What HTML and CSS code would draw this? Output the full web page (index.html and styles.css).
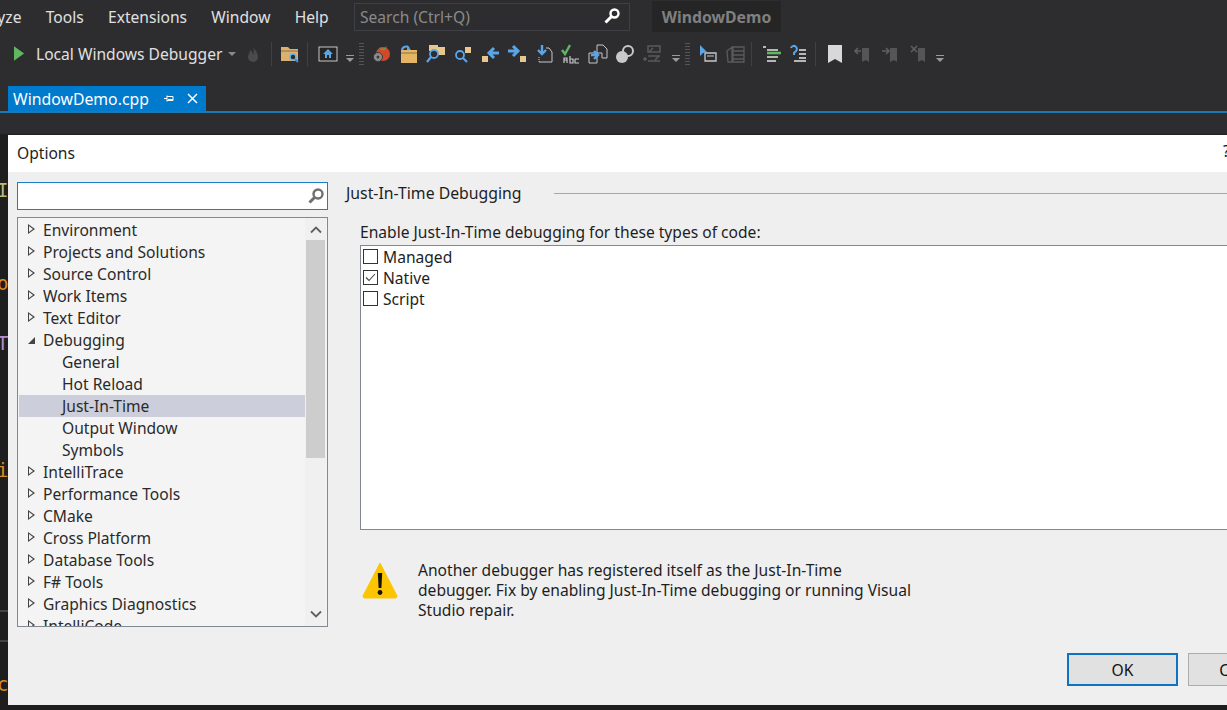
FILE: index.html
```html
<!DOCTYPE html>
<html lang="en">
<head>
<meta charset="utf-8">
<title>Options</title>
<link rel="stylesheet" href="styles.css">
</head>
<body>
<div class="ide">
  <div class="menubar">
    <span class="menu-item first">Analyze</span>
    <span class="menu-item">Tools</span>
    <span class="menu-item">Extensions</span>
    <span class="menu-item">Window</span>
    <span class="menu-item">Help</span>
    <div class="quick-search">
      <span>Search (Ctrl+Q)</span>
      <svg class="key" viewBox="0 0 18 18"><circle cx="11.5" cy="6.5" r="4" fill="none" stroke="#fff" stroke-width="2.4"/><path d="M8.5 9.5 2.5 15.5" stroke="#fff" stroke-width="3"/></svg>
    </div>
    <div class="solution-name">WindowDemo</div>
  </div>

  <div class="toolbar">
    <svg class="play" viewBox="0 0 12 16"><path d="M0 0 11 8 0 16z" fill="#5fb760"/></svg>
    <span class="debugger">Local Windows Debugger</span>
    <svg class="drop" viewBox="0 0 8 4"><path d="M0 0h8L4 4z" fill="#8a8a8a"/></svg>
    <svg class="ico flame" viewBox="0 0 20 20"><path d="M10 2c1 4 5 6 5 11a5 5 0 0 1-10 0c0-3 2-4 2-7 2 1 3 3 3 5 1-2 1-6 0-9z" fill="#4a4a4c"/></svg>
    <i class="sep sep-a"></i>
    <svg class="ico" viewBox="0 0 20 20"><path d="M1 3h7l2 2h8v12H1z" fill="#d9b26f"/><path d="M1 7h17" stroke="#8e7342"/><circle cx="13" cy="13" r="3" fill="#2d2d30" stroke="#6db0e8" stroke-width="1.6"/><path d="m15 15 3 3" stroke="#3b8fd6" stroke-width="2"/></svg>
    <i class="sep sep-b"></i>
    <svg class="ico" viewBox="0 0 20 20"><rect x="1" y="3" width="18" height="14" fill="#252526" stroke="#c8c8c8"/><path d="m10 5-5 5h2v4h6v-4h2z" fill="#5aa5e6"/><rect x="9" y="11" width="2" height="3" fill="#252526"/></svg>
    <svg class="more more-a" viewBox="0 0 8 8"><path d="M0 0h8v1H0z" fill="#9a9a9a"/><path d="M0 3h8L4 7z" fill="#9a9a9a"/></svg>
    <i class="grip"></i>
    <svg class="ico tight" viewBox="0 0 20 20"><circle cx="12" cy="10" r="7" fill="#d2492a"/><path d="m9 3 3 2 4-3-2 4h-4z" fill="#5aa050"/><circle cx="7" cy="13" r="4.5" fill="#8d8d8d" stroke="#3a3a3a"/><circle cx="7" cy="13" r="1.5" fill="#3a3a3a"/></svg>
    <svg class="ico" viewBox="0 0 20 20"><path d="M2 6h16v13H2z" fill="#e3b565"/><path d="M2 9h16" stroke="#8e7342"/><path d="M11 2h7v4h-7z" fill="#2d2d30"/><path d="M3 6a4 4 0 0 1 7-2" fill="none" stroke="#5aa5e6" stroke-width="2"/><path d="M8 1v5h4z" fill="#5aa5e6"/></svg>
    <svg class="ico" viewBox="0 0 20 20"><rect x="3" y="1" width="9" height="6" fill="#e8c78e"/><rect x="11" y="3" width="8" height="8" fill="#e8c78e"/><circle cx="8" cy="10" r="4" fill="#2d2d30" stroke="#5aa5e6" stroke-width="1.8"/><path d="m5 13-4 5" stroke="#5aa5e6" stroke-width="2.2"/></svg>
    <svg class="ico" viewBox="0 0 20 20"><rect x="12" y="3" width="6" height="6" fill="#e8c78e"/><circle cx="7" cy="11" r="4" fill="none" stroke="#5aa5e6" stroke-width="1.8"/><path d="m10 14 4 4" stroke="#5aa5e6" stroke-width="2.2"/></svg>
    <svg class="ico" viewBox="0 0 20 20"><rect x="2" y="12" width="6" height="6" fill="#e8c78e"/><path d="M19 9h-8m3-5-5 5 5 5" fill="none" stroke="#5aa5e6" stroke-width="3"/></svg>
    <svg class="ico" viewBox="0 0 20 20"><rect x="13" y="12" width="6" height="6" fill="#e8c78e"/><path d="M1 7h8M6 2l5 5-5 5" fill="none" stroke="#5aa5e6" stroke-width="3"/></svg>
    <svg class="ico" viewBox="0 0 20 20"><path d="M12 4h3l3 4v10H5" fill="none" stroke="#c8c8c8"/><path d="M5 18v-6" stroke="#c8c8c8" stroke-dasharray="1 1"/><path d="M8 1v9M4 6l4 4 4-4" fill="none" stroke="#5aa5e6" stroke-width="2.4"/></svg>
    <svg class="ico" viewBox="0 0 20 20"><path d="m1 6 3 4 5-9" fill="none" stroke="#5fb760" stroke-width="2.4"/><path d="M3 19v-5h3v5M3 16h3M9 12v7h3v-4H9M14 15h4M14 15v4h4" fill="none" stroke="#c8c8c8" stroke-width="1.2"/></svg>
    <svg class="ico" viewBox="0 0 20 20"><path d="M9 1h6l4 4v9h-5V9H9z" fill="#2d2d30" stroke="#c8c8c8"/><path d="M1 9h8v10H1z" fill="#2d2d30" stroke="#c8c8c8"/><path d="M3 11h6m-3-4 4 4-4 4" fill="none" stroke="#5aa5e6" stroke-width="2.4"/></svg>
    <svg class="ico" viewBox="0 0 20 20"><circle cx="13" cy="7" r="5" fill="none" stroke="#c8c8c8" stroke-width="2"/><circle cx="7" cy="13" r="6" fill="#c8c8c8"/></svg>
    <svg class="ico dim" viewBox="0 0 20 20"><rect x="6" y="2" width="12" height="6" fill="none" stroke="#5a5a5c" stroke-width="1.5"/><path d="M6 12h12M6 17h12M1 15h4M3 13v4M7 8l4-4m2 12 4-4" stroke="#5a5a5c" stroke-width="1.5"/></svg>
    <svg class="more more-b" viewBox="0 0 8 8"><path d="M0 0h8v1H0z" fill="#9a9a9a"/><path d="M0 3h8L4 7z" fill="#9a9a9a"/></svg>
    <i class="grip"></i>
    <svg class="ico tight-b" viewBox="0 0 20 20"><path d="M7 9h11v8H7z" fill="none" stroke="#c8c8c8" stroke-width="1.3"/><path d="M9 12h7" stroke="#c8c8c8"/><path d="M2 1v11l3-3 4-1z" fill="#5aa5e6"/></svg>
    <svg class="ico dim" viewBox="0 0 20 20"><path d="M8 3h11v15H8zM8 7h11M8 11h11M8 15h11M2 7l5-4v15H3z" fill="none" stroke="#5a5a5c" stroke-width="1.3"/></svg>
    <i class="sep sep-c"></i>
    <svg class="ico" viewBox="0 0 20 20"><path d="M2 3h3M6 6h11M6 13h11M6 17h9" stroke="#e4e4e4" stroke-width="1.4"/><path d="M6 9h14" stroke="#5fb760" stroke-width="2.6"/></svg>
    <svg class="ico" viewBox="0 0 20 20"><path d="M3 4a3 3 0 1 1 5 3L6 9v2" fill="none" stroke="#5aa5e6" stroke-width="2"/><path d="M11 6h7M11 10h7M11 14h7M6 17h12" stroke="#e4e4e4" stroke-width="1.4"/></svg>
    <i class="sep sep-d"></i>
    <svg class="ico wide" viewBox="0 0 20 20"><path d="M3 1h14v18l-7-4-7 4z" fill="#d8d8d8"/></svg>
    <svg class="ico wide" viewBox="0 0 20 20"><path d="M9 4h7v14l-3-2-4 2z" fill="#555557"/><path d="M8 7H2m3-3L2 7l3 3" fill="none" stroke="#5f5f61" stroke-width="1.6"/></svg>
    <svg class="ico wide" viewBox="0 0 20 20"><path d="M9 4h7v14l-3-2-4 2z" fill="#555557"/><path d="M1 7h6M5 4l3 3-3 3" fill="none" stroke="#5f5f61" stroke-width="1.6"/></svg>
    <svg class="ico" viewBox="0 0 20 20"><path d="M9 4h7v14l-3-2-4 2z" fill="#555557"/><path d="m2 2 6 6m0-6L2 8" stroke="#5f5f61" stroke-width="1.6"/></svg>
    <svg class="more more-c" viewBox="0 0 8 8"><path d="M0 0h8v1H0z" fill="#9a9a9a"/><path d="M0 3h8L4 7z" fill="#9a9a9a"/></svg>
  </div>

  <div class="tabstrip">
    <div class="tab">
      <span>WindowDemo.cpp</span>
      <svg class="pin" viewBox="0 0 11 11"><path d="M1 5.500h3M4 2.500v6M4 3.500h6v4H4M5 6.500h5" fill="none" stroke="#fff"/></svg>
      <svg class="tab-x" viewBox="0 0 11 11"><path d="m1 1 9 9m0-9-9 9" stroke="#fff" stroke-width="1.500"/></svg>
    </div>
  </div>

  <div class="editor">
    <div class="code-line c-a">I</div>
    <div class="code-line c-b">o</div>
    <div class="code-line c-c">T</div>
    <div class="code-line c-d">i</div>
    <i class="rule rule-a"></i>
    <i class="rule rule-b"></i>
    <div class="code-line c-e">c</div>
  </div>
</div>

<section class="dialog">
  <header class="dialog-title">
    <span>Options</span>
    <span class="help">?</span>
  </header>
  <div class="dialog-body">
    <div class="nav">
      <div class="nav-search">
        <svg viewBox="0 0 18 18"><circle cx="11" cy="7" r="4.500" fill="none" stroke="#707070" stroke-width="2.400"/><path d="M7.500 10.500 2.500 15.500" stroke="#707070" stroke-width="3"/></svg>
      </div>
      <div class="tree">
        <div class="tree-rows">
          <div class="row closed">Environment</div>
          <div class="row closed">Projects and Solutions</div>
          <div class="row closed">Source Control</div>
          <div class="row closed">Work Items</div>
          <div class="row closed">Text Editor</div>
          <div class="row open">Debugging</div>
          <div class="row child">General</div>
          <div class="row child">Hot Reload</div>
          <div class="row child selected">Just-In-Time</div>
          <div class="row child">Output Window</div>
          <div class="row child">Symbols</div>
          <div class="row closed">IntelliTrace</div>
          <div class="row closed">Performance Tools</div>
          <div class="row closed">CMake</div>
          <div class="row closed">Cross Platform</div>
          <div class="row closed">Database Tools</div>
          <div class="row closed">F# Tools</div>
          <div class="row closed">Graphics Diagnostics</div>
          <div class="row closed">IntelliCode</div>
        </div>
        <div class="scrollbar">
          <svg class="arrow" viewBox="0 0 12 8"><path d="m1 6.500 5-5 5 5" fill="none" stroke="#606060" stroke-width="1.800"/></svg>
          <div class="thumb"></div>
          <svg class="arrow" viewBox="0 0 12 8"><path d="m1 1.500 5 5 5-5" fill="none" stroke="#606060" stroke-width="1.800"/></svg>
        </div>
      </div>
    </div>
    <div class="page">
      <div class="page-heading">
        <span>Just-In-Time Debugging</span>
        <i></i>
      </div>
      <div class="page-inner">
        <div class="field-label">Enable Just-In-Time debugging for these types of code:</div>
        <div class="checklist">
          <div class="check"><i class="box"></i><span>Managed</span></div>
          <div class="check"><i class="box"><svg viewBox="0 0 15 15"><path d="m3 7.500 3 3 6-6.500" fill="none" stroke="#444" stroke-width="1.100"/></svg></i><span>Native</span></div>
          <div class="check"><i class="box"></i><span>Script</span></div>
        </div>
        <div class="warning">
          <svg viewBox="0 0 36 38"><path d="M18 1 35 34a2 2 0 0 1-2 2H3a2 2 0 0 1-2-2z" fill="#fdc500" stroke="#fdc500" stroke-linejoin="round"/><path d="M15.800 11h4.400l-.8 15h-2.800z" fill="#111"/><circle cx="18" cy="30.500" r="2.400" fill="#111"/></svg>
          <p>Another debugger has registered itself as the Just-In-Time debugger. Fix by enabling Just-In-Time debugging or running Visual Studio repair.</p>
        </div>
      </div>
      <div class="buttons">
        <div class="btn default">OK</div>
        <div class="btn">Cancel</div>
      </div>
    </div>
  </div>
</section>
</body>
</html>
```

FILE: styles.css
```css
* { box-sizing: border-box; }
html, body { margin: 0; height: 100%; }
body {
  width: 1227px;
  height: 710px;
  overflow: hidden;
  position: relative;
  background: #2d2d30;
  font-family: "Noto Sans", "Liberation Sans", sans-serif;
}
i { display: block; }
.ide { display: flex; flex-direction: column; height: 710px; }

.menubar { height: 35px; display: flex; align-items: center; color: #e0e0e0; font-size: 15.6px; flex: none; padding-bottom: 2px; }
.menu-item { margin-right: 24.3px; white-space: nowrap; }
.menu-item.first { margin-left: -35px; }
.quick-search {
  margin-left: 1px; width: 276px; height: 28px; border: 1px solid #3f3f46;
  display: flex; align-items: center; justify-content: space-between;
  padding: 0 8px 0 5px; color: #8a8a8a; font-size: 15.6px;
}
.key { width: 18px; height: 18px; margin-top: -2px; }
.solution-name {
  margin-left: 22px; width: 129px; height: 31px; background: #252526;
  color: #808080; font-weight: 700; font-size: 15.8px;
  display: flex; align-items: center; justify-content: center;
}

.toolbar { height: 37px; display: flex; align-items: center; flex: none; padding-left: 14px; color: #e0e0e0; }
.play { width: 11px; height: 15px; flex: none; }
.debugger { margin-left: 11px; font-size: 15.6px; white-space: nowrap; }
.drop { width: 8px; height: 4px; margin-left: 6px; flex: none; }
.ico { width: 20px; height: 20px; margin-right: 7px; flex: none; }
.ico.flame { margin-left: 7px; margin-right: 8px; }
.ico.tight { margin-left: 2px; margin-right: 8px; }
.ico.tight-b { margin-left: 3px; }
.ico.wide { margin-right: 8px; }
.sep { width: 1px; height: 24px; background: #3f3f46; flex: none; }
.sep-a { margin-right: 8px; }
.sep-b { margin-left: 0; margin-right: 10px; }
.sep-c { margin-left: -1px; margin-right: 9px; }
.sep-d { margin-left: 0; margin-right: 9px; }
.more { width: 8px; height: 8px; margin-top: 10px; flex: none; }
.more-a { margin-left: 1px; }
.more-b { margin-left: 3px; }
.more-c { margin-left: 0; }
.grip { width: 5px; height: 22px; margin-left: 5px; margin-right: 5px; flex: none;
  background: repeating-linear-gradient(#55555a 0 1px, transparent 1px 3px); }

.tabstrip { height: 41px; flex: none; padding: 14px 0 0 8px; border-bottom: 2px solid #1b79b5; }
.tab {
  width: 198px; height: 25px; background: #007acc; color: #fff; font-size: 15.8px;
  display: flex; align-items: center; padding-left: 5px;
}
.pin { width: 11px; height: 11px; margin-left: 14px; flex: none; }
.tab-x { width: 11px; height: 11px; margin-left: 13px; flex: none; }

.editor { flex: 1; padding-top: 20px; overflow: hidden; font-family: "DejaVu Sans Mono", monospace; font-size: 19px; line-height: 20px; background: linear-gradient(#2d2d30 0 20px, #1e1e1e 22px); }
.code-line { height: 20px; margin-left: -3px; }
.c-a { color: #b8b878; margin-top: 47px; }
.c-b { color: #d98a1e; margin-top: 73px; }
.c-c { color: #b58cc8; margin-top: 40px; }
.c-d { color: #d98a1e; margin-top: 107px; }
.rule { height: 2px; width: 8px; background: #444; }
.rule-a { margin-top: 130px; }
.rule-b { margin-top: 28px; }
.c-e { color: #d98a1e; margin-top: 32px; }

.dialog {
  position: absolute; left: 8px; top: 135px; width: 1400px; height: 570px;
  background: #efefef; color: #1e1e1e; font-size: 15.6px;
  display: flex; flex-direction: column;
}
.dialog-title {
  height: 37px; flex: none; background: #fff; display: flex; align-items: center;
  padding: 0 0 2px 9px; position: relative;
}
.help { position: absolute; left: 1215px; top: 5px; color: #111; }
.dialog-body { flex: 1; display: flex; }
.nav { width: 311px; margin-left: 9px; padding-top: 10px; flex: none; }
.nav-search {
  height: 28px; border: 1px solid #1a7fc4; background: #fff;
  display: flex; justify-content: flex-end; align-items: center; padding-right: 2px;
}
.nav-search svg { width: 18px; height: 18px; }
.tree {
  margin-top: 7px; height: 410px; border: 1px solid #828790; background: #f4f4f4;
  display: flex; overflow: hidden; padding-left: 1px;
}
.tree-rows { width: 286px; flex: none; padding-top: 1px; color: #2a2a2a; }
.row { height: 22px; line-height: 23px; white-space: nowrap; position: relative; }
.closed, .open { padding-left: 24px; }
.child { padding-left: 43px; }
.selected { background: #cccedb; }
.closed::before {
  content: ""; position: absolute; left: 9px; top: 5px; border-style: solid;
  border-width: 5.5px 0 5.5px 7px; border-color: transparent transparent transparent #444;
}
.closed::after {
  content: ""; position: absolute; left: 10px; top: 6.9px; border-style: solid;
  border-width: 3.6px 0 3.6px 4.6px; border-color: transparent transparent transparent #f4f4f4;
}
.open::before {
  content: ""; position: absolute; left: 9px; top: 8px; border-style: solid;
  border-width: 0 0 7px 7px; border-color: transparent transparent #444 transparent;
}
.scrollbar { width: 21px; flex: none; background: #f0f0f0; display: flex; flex-direction: column; align-items: center; padding: 0 1px; }
.arrow { width: 12px; height: 8px; flex: none; margin: 8px 0 6px; }
.thumb { width: 19px; height: 218px; background: #cdcdcd; flex: none; }
.scrollbar .arrow:last-child { margin-top: 152px; }

.page { flex: 1; padding: 10px 0 0 18px; min-width: 0; }
.page-heading { display: flex; align-items: center; height: 22px; white-space: nowrap; }
.page-heading span { line-height: 22px; font-size: 15.8px; }
.page-heading i { flex: 1; height: 1px; background: #a8a8a8; margin-left: 32px; }
.page-inner { padding-left: 14px; }
.field-label { margin-top: 18px; height: 23px; line-height: 21px; white-space: nowrap; }
.checklist { height: 285px; border: 1px solid #828790; background: #fff; padding: 0 0 0 2px; margin-right: -2px; }
.check { height: 21px; display: flex; align-items: center; }
.check span { margin-left: 5px; line-height: 21px; padding-top: 2px; }
.box { width: 15px; height: 15px; border: 1px solid #333; background: #fff; flex: none; position: relative; }
.box svg { position: absolute; left: -1px; top: -1px; width: 15px; height: 15px; }
.warning { display: flex; margin-top: 30px; width: 552px; }
.warning svg { width: 36px; height: 38px; margin-left: 2px; margin-top: 2px; flex: none; }
.warning p { margin: 0 0 0 20px; line-height: 20px; color: #1e1e1e; }
.buttons { display: flex; gap: 10px; padding-left: 721px; margin-top: 33px; }
.btn { width: 111px; height: 33px; background: #e1e1e1; border: 1px solid #adadad; display: flex; align-items: center; justify-content: center; color: #111; }
.btn.default { border: 2px solid #0f73c4; }
```
